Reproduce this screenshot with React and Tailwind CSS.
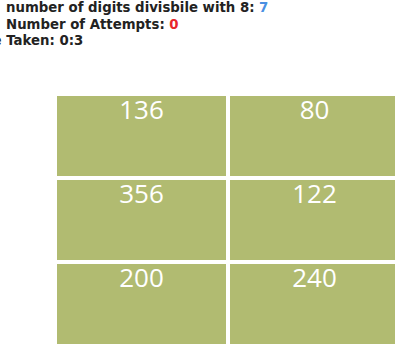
export default function App() {
  const cells = ['136', '80', '356', '122', '200', '240'];

  return (
    <div className="w-[395px] h-[347px] overflow-hidden bg-white">
      {/* Stats */}
      <div className="pl-[6px] text-[13.3px] leading-[16.5px] font-bold text-[#222]" style={{ fontFamily: '"DejaVu Sans", sans-serif' }}>
        <p>
          number of digits divisbile with 8: <span className="text-[#4a90e2]">7</span>
        </p>
        <p>
          Number of Attempts: <span className="text-[#e8262b]">0</span>
        </p>
        <p className="-ml-[41px] whitespace-nowrap">Time Taken: 0:3</p>
      </div>

      {/* Number grid */}
      <div
        className="mt-[46px] ml-[57px] grid grid-cols-[169px_169px] auto-rows-[80px] gap-[4px] w-[342px]"
        style={{ fontFamily: '"Open Sans", sans-serif' }}
      >
        {cells.map((n) => (
          <div key={n} className="bg-[#b1bb71] text-white text-[26px] font-medium leading-none text-center">
            {n}
          </div>
        ))}
      </div>
    </div>
  );
}
